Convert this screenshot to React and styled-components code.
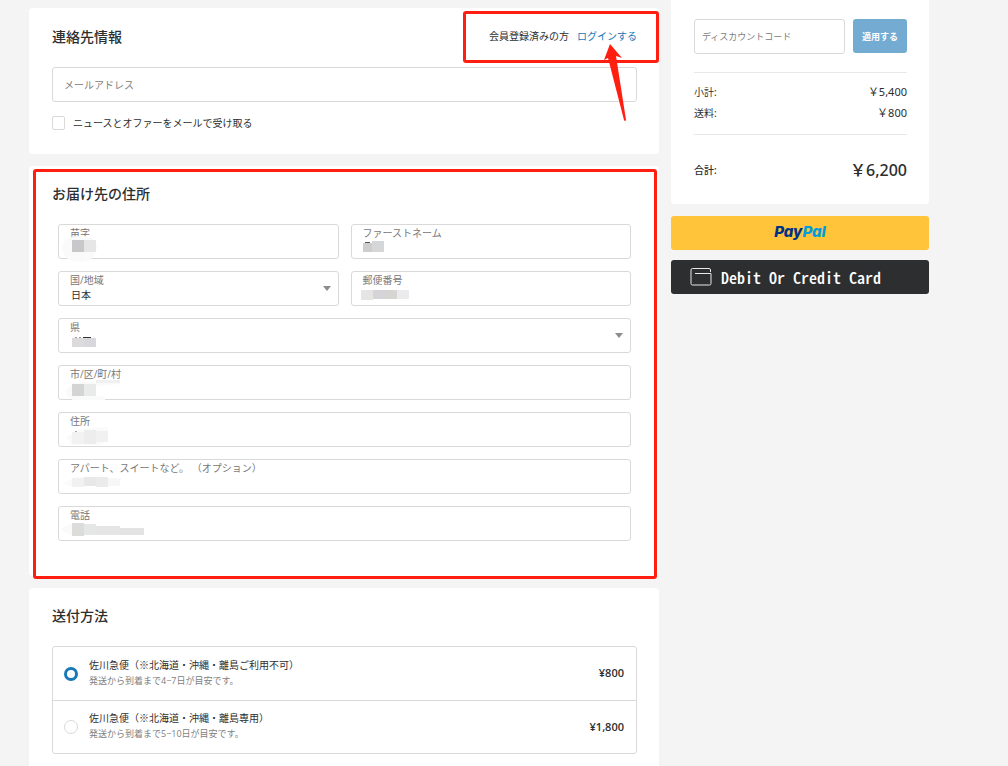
import styled, { createGlobalStyle } from "styled-components";

const GlobalStyles = createGlobalStyle`
  :root {
    --ink: #2c2e2f;
    --muted: #808080;
    --line: #d9d9d9;
    --blue: #1878b9;
    --mark: #ff1e10;
  }
  * {
    box-sizing: border-box;
  }
  body {
    margin: 0;
    background: #f4f4f4;
    color: var(--ink);
    font-family: "Open Sans", "Noto Sans CJK JP", sans-serif;
    font-size: 10px;
  }
  input, select, button {
    font-family: inherit;
    font-size: inherit;
    color: inherit;
  }
`;

const PageStyles = styled.div`
  display: grid;
  grid-template-columns: minmax(0, 630fr) minmax(0, 258fr);
  gap: 12px;
  align-items: start;
  padding: 0 79px 0 29px;
  @media screen and (max-width: 700px) {
    grid-template-columns: 1fr;
    padding: 0 12px;
  }
`;

const Main = styled.main`
  display: flex;
  flex-direction: column;
  gap: 12px;
  padding-top: 8px;
`;

const Card = styled.section`
  position: relative;
  padding: 16px 22px ${({ $bottom }) => $bottom || 24}px 23px;
  background: white;
  border-radius: 4px;
`;

const CardHeader = styled.header`
  display: flex;
  align-items: center;
  justify-content: space-between;
  min-height: 24px;
  margin-bottom: 18px;
  h2 {
    margin: 0;
    font-size: 14px;
    line-height: 24px;
    font-weight: 500;
  }
  p {
    display: flex;
    gap: 8px;
    margin: 0;
    line-height: 25px;
  }
  a {
    color: var(--blue);
    text-decoration: none;
  }
`;

const TextInput = styled.input`
  display: block;
  width: 100%;
  min-width: 0;
  height: 35px;
  padding: 0 ${({ $small }) => ($small ? 7 : 11)}px;
  border: 1px solid var(--line);
  border-radius: 3px;
  background: white;
  font-size: ${({ $small }) => ($small ? 9 : 10)}px;
  outline: none;
  &::placeholder {
    color: var(--muted);
    opacity: 1;
  }
`;

const CheckRow = styled.label`
  display: flex;
  align-items: center;
  gap: 8px;
  margin-top: 14px;
  line-height: 14px;
  input {
    appearance: none;
    width: 13px;
    height: 14px;
    margin: 0;
    border: 1px solid var(--line);
    border-radius: 2px;
    &:checked {
      background: var(--blue);
    }
  }
`;

const AddressGrid = styled.div`
  display: grid;
  grid-template-columns: 1fr 1fr;
  gap: 12px;
  padding: 0 6px;
`;

const FieldStyles = styled.div`
  position: relative;
  display: flex;
  flex-direction: column;
  grid-column: ${({ $wide }) => ($wide ? "1 / -1" : "auto")};
  height: 35px;
  padding-top: 1px;
  border: 1px solid var(--line);
  border-radius: 3px;
  label {
    padding-left: 11px;
    line-height: 14px;
    color: #777;
  }
  input,
  select {
    appearance: none;
    width: 100%;
    height: 16px;
    padding: 0 12px;
    border: none;
    background: none;
    outline: none;
  }
`;

const Arrow = styled.svg`
  position: absolute;
  top: 14px;
  right: 7px;
  pointer-events: none;
`;

const Mosaic = styled.svg`
  position: absolute;
  top: -1px;
  left: -1px;
  overflow: visible;
  pointer-events: none;
`;

const Options = styled.div`
  border: 1px solid var(--line);
  border-radius: 3px;
`;

const Option = styled.label`
  display: flex;
  align-items: center;
  gap: 11px;
  height: 53px;
  padding: 0 12px 0 11px;
  & + & {
    border-top: 1px solid var(--line);
  }
  input {
    appearance: none;
    flex: none;
    width: 14px;
    height: 14px;
    margin: 0;
    border: 1px solid var(--line);
    border-radius: 50%;
    background: white;
    &:checked {
      border: 3px solid var(--blue);
    }
  }
  span {
    flex: 1;
    padding-bottom: 2px;
    line-height: 16px;
  }
  small {
    display: block;
    font-size: 9px;
    color: var(--muted);
  }
  b {
    padding-bottom: 2px;
    font-size: 11px;
    font-weight: 600;
  }
`;

const MarkBox = styled.div`
  position: absolute;
  border: 3px solid var(--mark);
  border-radius: 3px;
  pointer-events: none;
`;

const LoginMark = styled(MarkBox)`
  top: 3px;
  right: 0;
  width: 196px;
  height: 52px;
`;

const AddressMark = styled(MarkBox)`
  top: 3px;
  right: 2px;
  bottom: -3px;
  left: 4px;
`;

const Pointer = styled.svg`
  position: absolute;
  top: 36px;
  right: 32px;
  z-index: 1;
  pointer-events: none;
`;

const Summary = styled.section`
  padding: 19px 22px 0 23px;
  background: white;
  border-radius: 0 0 4px 4px;
`;

const Discount = styled.form`
  display: flex;
  align-items: flex-start;
  gap: 8px;
  margin-bottom: 18px;
  button {
    flex: none;
    width: 54px;
    height: 34px;
    padding: 0;
    border: none;
    border-radius: 3px;
    background: #74abd2;
    color: white;
    font-size: 9px;
    font-weight: 700;
  }
`;

const Totals = styled.dl`
  margin: 0;
  padding: 8px 0 11px;
  border: solid #e8e8e8;
  border-width: 1px 0;
`;

const GrandTotal = styled.dl`
  margin: 0;
`;

const TotalRow = styled.div`
  display: flex;
  align-items: center;
  justify-content: space-between;
  height: ${({ $grand }) => ($grand ? 69 : 21)}px;
  font-family: "Noto Sans", "Noto Sans CJK JP", sans-serif;
  font-weight: ${({ $grand }) => ($grand ? 500 : 400)};
  dd {
    margin: 0;
    font-size: ${({ $grand }) => ($grand ? 16 : 11)}px;
    line-height: 20px;
  }
`;

const PayButtons = styled.div`
  display: flex;
  flex-direction: column;
  gap: 10px;
  margin-top: 12px;
`;

const PayButton = styled.button`
  display: flex;
  align-items: center;
  height: 34px;
  border: none;
  border-radius: 3px;
  cursor: pointer;
`;

const PayPalButton = styled(PayButton)`
  justify-content: center;
  padding: 0 0 3px;
  background: #ffc439;
  color: #003087;
  font-family: Inter, sans-serif;
  font-size: 15px;
  font-weight: 800;
  font-style: italic;
  span span {
    color: #009cde;
  }
`;

const CardButton = styled(PayButton)`
  gap: 9px;
  padding: 0 19px;
  background: #2c2e2f;
  color: white;
  font-family: "Noto Sans CJK JP", monospace;
  font-size: 16px;
  font-weight: 500;
  font-feature-settings: "hwid";
  white-space: nowrap;
`;

// x, y, width, height, fill
const fields = [
  {
    id: "last",
    label: "苗字",
    veil: "M4 25 Q5 12 22 12 Q39 11 39 24 Q37 38 21 38 Q7 38 4 25",
    blocks: [
      [14, 16, 12, 12, "#c8c8ca"],
      [26, 16, 12, 12, "#e6e6e6"],
    ],
  },
  {
    id: "first",
    label: "ファーストネーム",
    blocks: [
      [14, 18, 5, 1, "#555"],
      [12, 19, 9, 9, "#cfcdcb"],
      [21, 17, 12, 11, "#d5d6d8"],
    ],
  },
  { id: "country", label: "国/地域", options: ["日本"] },
  {
    id: "zip",
    label: "郵便番号",
    blocks: [
      [10, 19, 12, 10, "#e5e5e3"],
      [22, 19, 12, 9, "#d6d4d8"],
      [34, 19, 12, 9, "#d7d5d2"],
      [46, 19, 12, 9, "#ebebed"],
    ],
  },
  {
    id: "pref",
    label: "県",
    wide: true,
    options: [""],
    blocks: [
      [17, 19, 2, 1, "#999"],
      [21, 19, 2, 1, "#999"],
      [25, 19, 8, 1, "#333"],
      [14, 20, 12, 9, "#dcdada"],
      [26, 20, 12, 9, "#d8d8dc"],
    ],
  },
  {
    id: "city",
    label: "市/区/町/村",
    wide: true,
    veil: "M8 25 L16 18 L62 16 L62 19 L38 21 V31 L47 32 V35 H15 Q8 32 8 25",
    blocks: [
      [38, 15, 24, 3, "#f0f0f0"],
      [14, 19, 12, 12, "#d5d4d4"],
      [26, 19, 12, 12, "#e9ebeb"],
    ],
  },
  {
    id: "street",
    label: "住所",
    wide: true,
    veil: "M8 25 L25 17 L50 15 V29 L42 33 H14 Z",
    blocks: [
      [17, 19, 2, 1, "#aaa"],
      [14, 20, 12, 12, "#f2f2f2"],
      [26, 18, 12, 14, "#ededed"],
      [38, 19, 12, 11, "#f1f1f1"],
    ],
  },
  {
    id: "apt",
    label: "アパート、スイートなど。 （オプション）",
    wide: true,
    veil: "M4 25 L18 18 L64 19 L58 27 H12 Z",
    blocks: [
      [14, 19, 12, 9, "#f1f1f1"],
      [26, 18, 12, 9, "#e8e8e8"],
      [38, 18, 12, 10, "#ebebeb"],
      [50, 20, 12, 7, "#f7f7f7"],
    ],
  },
  {
    id: "tel",
    label: "電話",
    wide: true,
    veil: "M3 23 Q9 17 20 18 V30 Q9 30 3 23",
    blocks: [
      [14, 17, 12, 13, "#dcdcdb"],
      [26, 18, 12, 11, "#e5e7e7"],
      [38, 20, 24, 9, "#e5e5e5"],
      [62, 22, 24, 7, "#e3e3e3"],
    ],
  },
];

const shipping = [
  {
    id: "normal",
    name: "佐川急便（※北海道・沖縄・離島ご利用不可）",
    note: "発送から到着まで4−7日が目安です。",
    price: "¥800",
  },
  {
    id: "island",
    name: "佐川急便（※北海道・沖縄・離島専用）",
    note: "発送から到着まで5−10日が目安です。",
    price: "¥1,800",
  },
];

function Field({ id, label, wide, options, blocks, veil }) {
  return (
    <FieldStyles $wide={wide}>
      <label htmlFor={id}>{label}</label>
      {options ? (
        <select id={id}>
          {options.map((o) => (
            <option key={o}>{o}</option>
          ))}
        </select>
      ) : (
        <input id={id} type="text" />
      )}
      {options && (
        <Arrow width="8" height="5" viewBox="0 0 8 5">
          <path d="M0 0H8L4 5Z" fill="#8c8c8c" />
        </Arrow>
      )}
      {blocks && (
        <Mosaic width="90" height="35" aria-hidden="true">
          {veil && <path d={veil} fill="#fafafa" />}
          {blocks.map(([x, y, w, h, fill]) => (
            <rect key={x + "-" + y} x={x} y={y} width={w} height={h} fill={fill} />
          ))}
        </Mosaic>
      )}
    </FieldStyles>
  );
}

export default function App() {
  return (
    <>
      <GlobalStyles />
      <PageStyles>
        <Main>
          <Card>
            <CardHeader>
              <h2>連絡先情報</h2>
              <p>
                会員登録済みの方 <a href="#login">ログインする</a>
              </p>
            </CardHeader>
            <TextInput type="email" placeholder="メールアドレス" aria-label="メールアドレス" />
            <CheckRow>
              <input type="checkbox" />
              ニュースとオファーをメールで受け取る
            </CheckRow>
            <LoginMark />
            <Pointer width="24" height="78" viewBox="0 0 24 78">
              <path d="M7 0L19 14L13 12L23 76Q22 78 21 76L5 14L1 16Z" fill="#ff1e10" />
            </Pointer>
          </Card>
          <Card $bottom={35}>
            <CardHeader>
              <h2>お届け先の住所</h2>
            </CardHeader>
            <AddressGrid>
              {fields.map((f) => (
                <Field key={f.id} {...f} />
              ))}
            </AddressGrid>
            <AddressMark />
          </Card>
          <Card>
            <CardHeader>
              <h2>送付方法</h2>
            </CardHeader>
            <Options>
              {shipping.map((s, i) => (
                <Option key={s.id}>
                  <input type="radio" name="shipping" value={s.id} defaultChecked={i === 0} />
                  <span>
                    {s.name}
                    <small>{s.note}</small>
                  </span>
                  <b>{s.price}</b>
                </Option>
              ))}
            </Options>
          </Card>
        </Main>
        <aside>
          <Summary>
            <Discount onSubmit={(event) => event.preventDefault()}>
              <TextInput
                $small
                type="text"
                placeholder="ディスカウントコード"
                aria-label="ディスカウントコード"
              />
              <button type="submit">適用する</button>
            </Discount>
            <Totals>
              <TotalRow>
                <dt>小計:</dt>
                <dd>￥5,400</dd>
              </TotalRow>
              <TotalRow>
                <dt>送料:</dt>
                <dd>￥800</dd>
              </TotalRow>
            </Totals>
            <GrandTotal>
              <TotalRow $grand>
                <dt>合計:</dt>
                <dd>￥6,200</dd>
              </TotalRow>
            </GrandTotal>
          </Summary>
          <PayButtons>
            <PayPalButton type="button">
              <span>
                Pay<span>Pal</span>
              </span>
            </PayPalButton>
            <CardButton type="button">
              <svg width="22" height="18" viewBox="0 0 22 18" fill="none" stroke="#e8e8e8">
                <path d="M20.5 4V2Q20.5 0.5 19 0.5H2.5Q1 0.5 1 2V15.5Q1 17 2.5 17H19.5Q21 17 21 15.5V5.5H5" />
              </svg>
              Debit Or Credit Card
            </CardButton>
          </PayButtons>
        </aside>
      </PageStyles>
    </>
  );
}
